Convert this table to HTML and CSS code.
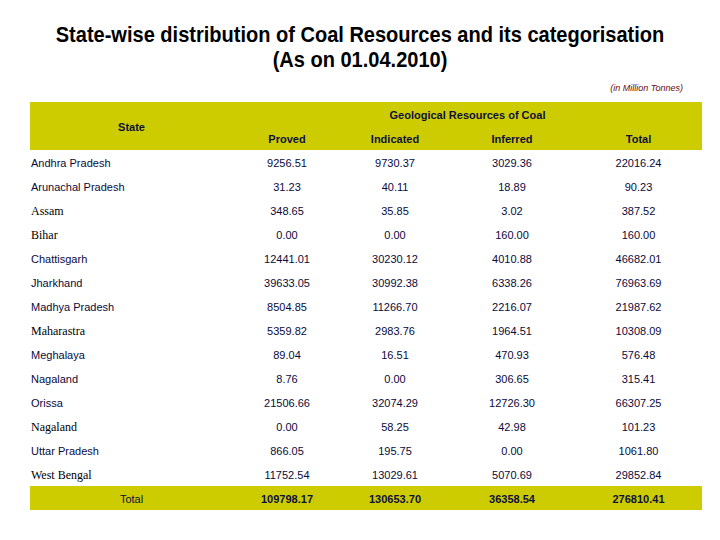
FILE: index.html
```html
<!DOCTYPE html>
<html>
<head>
<meta charset="utf-8">
<link rel="stylesheet" href="styles.css">
</head>
<body>
<div class="page">
  <h1 class="title">State-wise distribution of Coal Resources and its categorisation<br>(As on 01.04.2010)</h1>
  <div class="unit">(in Million Tonnes)</div>
  <table class="coal">
    <colgroup>
      <col class="c-state"><col class="c-num"><col class="c-num"><col class="c-inf"><col class="c-tot">
    </colgroup>
    <thead>
      <tr class="h1">
        <th rowspan="2" class="state-h">State</th>
        <th colspan="4" class="geo">Geological Resources of Coal</th>
      </tr>
      <tr class="h2">
        <th>Proved</th><th>Indicated</th><th>Inferred</th><th>Total</th>
      </tr>
    </thead>
    <tbody>
      <tr><td class="st">Andhra Pradesh</td><td>9256.51</td><td>9730.37</td><td>3029.36</td><td>22016.24</td></tr>
      <tr><td class="st">Arunachal Pradesh</td><td>31.23</td><td>40.11</td><td>18.89</td><td>90.23</td></tr>
      <tr><td class="st serif">Assam</td><td>348.65</td><td>35.85</td><td>3.02</td><td>387.52</td></tr>
      <tr><td class="st serif">Bihar</td><td>0.00</td><td>0.00</td><td>160.00</td><td>160.00</td></tr>
      <tr><td class="st">Chattisgarh</td><td>12441.01</td><td>30230.12</td><td>4010.88</td><td>46682.01</td></tr>
      <tr><td class="st">Jharkhand</td><td>39633.05</td><td>30992.38</td><td>6338.26</td><td>76963.69</td></tr>
      <tr><td class="st">Madhya Pradesh</td><td>8504.85</td><td>11266.70</td><td>2216.07</td><td>21987.62</td></tr>
      <tr><td class="st serif">Maharastra</td><td>5359.82</td><td>2983.76</td><td>1964.51</td><td>10308.09</td></tr>
      <tr><td class="st">Meghalaya</td><td>89.04</td><td>16.51</td><td>470.93</td><td>576.48</td></tr>
      <tr><td class="st">Nagaland</td><td>8.76</td><td>0.00</td><td>306.65</td><td>315.41</td></tr>
      <tr><td class="st">Orissa</td><td>21506.66</td><td>32074.29</td><td>12726.30</td><td>66307.25</td></tr>
      <tr><td class="st serif">Nagaland</td><td>0.00</td><td>58.25</td><td>42.98</td><td>101.23</td></tr>
      <tr><td class="st">Uttar Pradesh</td><td>866.05</td><td>195.75</td><td>0.00</td><td>1061.80</td></tr>
      <tr><td class="st serif">West Bengal</td><td>11752.54</td><td>13029.61</td><td>5070.69</td><td>29852.84</td></tr>
    </tbody>
    <tfoot>
      <tr class="total"><td class="tot-label">Total</td><td>109798.17</td><td>130653.70</td><td>36358.54</td><td>276810.41</td></tr>
    </tfoot>
  </table>
</div>
</body>
</html>
```

FILE: styles.css
```css
html, body {
  margin: 0;
  padding: 0;
  background: #ffffff;
}
.page {
  width: 720px;
  height: 540px;
  font-family: "Liberation Sans", Arial, sans-serif;
}
.title {
  margin: 0;
  padding-top: 22px;
  text-align: center;
  font-family: "Liberation Sans", Arial, sans-serif;
  font-size: 22px;
  font-weight: bold;
  line-height: 25px;
  color: #000000;
  transform: scaleX(0.91);
}
.unit {
  margin-top: 10px;
  padding-right: 37px;
  text-align: right;
  font-style: italic;
  font-size: 9px;
  line-height: 12px;
  color: #6b0a0a;
}
.coal {
  margin-top: 8px;
  margin-left: 30px;
  width: 672px;
  border-collapse: collapse;
  table-layout: fixed;
  color: #0a0a3c;
}
.c-state { width: 203px; }
.c-num { width: 108px; }
.c-inf { width: 126px; }
.c-tot { width: 127px; }
.coal th, .coal td {
  padding: 0;
  padding-top: 1px;
  height: 23px;
  font-size: 11px;
  text-align: center;
  vertical-align: middle;
}
.coal thead tr {
  background: #cccc00;
}
.coal th {
  font-weight: bold;
  color: #101040;
}
.coal td.st {
  text-align: left;
  padding-left: 1px;
}
.coal td.serif {
  font-family: "Liberation Serif", "Times New Roman", serif;
  font-size: 12px;
  padding-top: 3px;
  height: 21px;
  color: #000000;
}
.coal tfoot tr {
  background: #cccc00;
}
.coal tfoot td {
  font-weight: bold;
  color: #101040;
}
.coal tfoot td.tot-label {
  font-weight: normal;
}
```
